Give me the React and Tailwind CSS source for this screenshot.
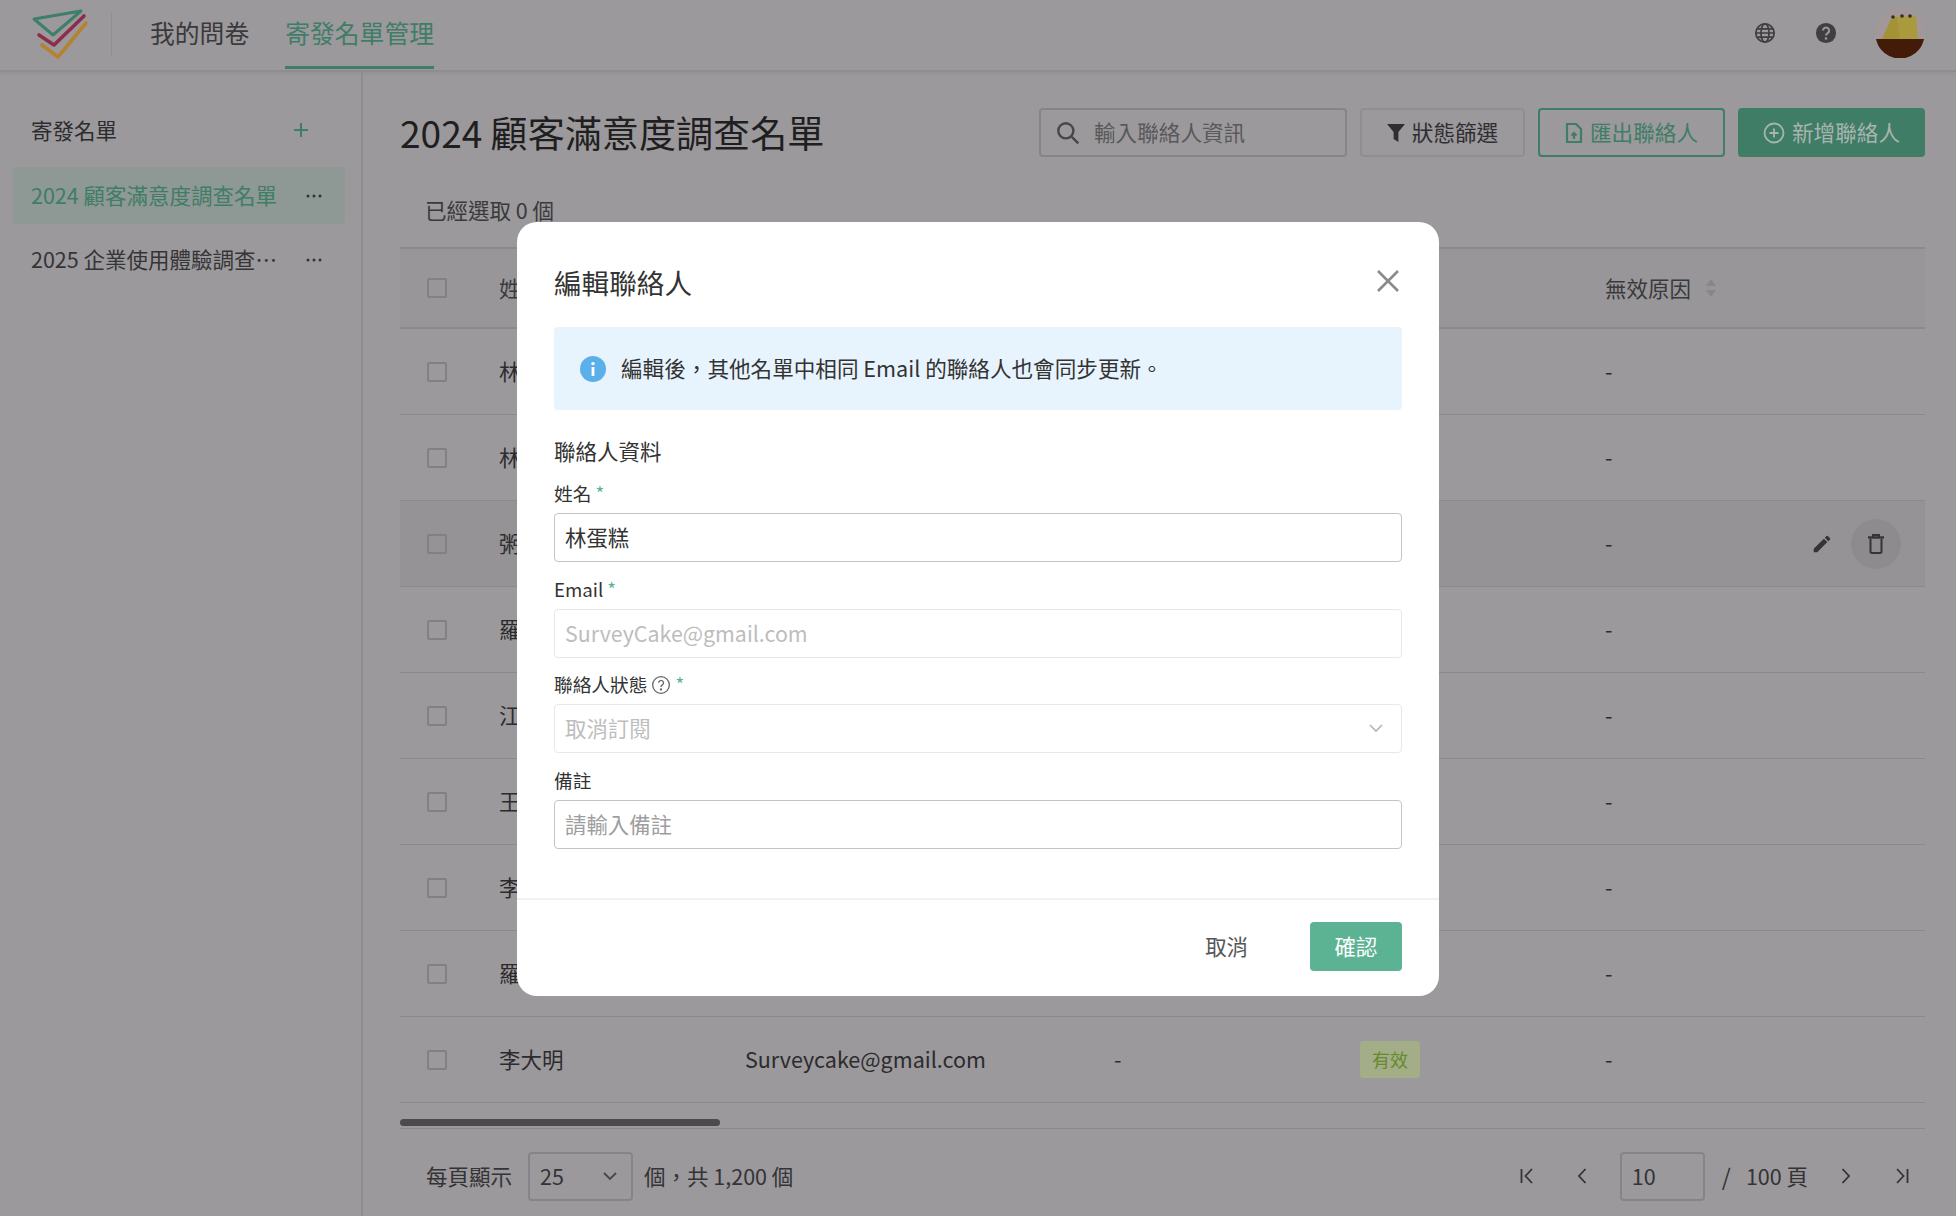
import React from "react";

const Checkbox = () => <span className="block w-[20px] h-[20px] border-2 border-[#818083] rounded-[2px]" />;

const Sort = () => (
  <svg width="12" height="20" viewBox="0 0 12 20" className="ml-[14px] text-[#88868a]" fill="currentColor">
    <path d="M6 1 11 8H1z" /><path d="M6 19 1 12h10z" />
  </svg>
);

const Dots = () => (
  <svg width="16" height="4" viewBox="0 0 16 4" className="text-[#333335]" fill="currentColor">
    <circle cx="2" cy="2" r="1.5" /><circle cx="8" cy="2" r="1.5" /><circle cx="14" cy="2" r="1.5" />
  </svg>
);

const rows = [
  { n: "林蛋糕", h: false },
  { n: "林小美", h: false },
  { n: "粥品香", h: true },
  { n: "羅大佑", h: false },
  { n: "江小魚", h: false },
  { n: "王小明", h: false },
  { n: "李小龍", h: false },
  { n: "羅志明", h: false },
  { n: "李大明", h: false },
];

const grid = "grid grid-cols-[99px_246px_369px_246px_245px_1fr] items-center";

const Row = ({ n, h }) => (
  <div className={`${grid} h-[86px] border-b border-[#8b898c] text-[21.5px] text-[#2c2b2d] ${h ? "bg-[#959396]" : ""}`}>
    <div className="pl-[27px]"><Checkbox /></div>
    <div>{n}</div>
    <div>Surveycake@gmail.com</div>
    <div>-</div>
    <div className="flex items-center">
      <span className="h-[37px] w-[60px] flex items-center justify-center rounded-[3px] bg-[#a3ad87] text-[18px] text-[#668a2c]">有效</span>
    </div>
    <div className="flex items-center justify-between pr-[24px]">
      <span>-</span>
      {h && (
        <div className="flex items-center gap-[18px]">
          <svg width="22" height="22" viewBox="0 0 24 24" fill="#343335">
            <path d="M3 17.25V21h3.75L17.81 9.94l-3.75-3.75L3 17.25zM20.71 7.04a1 1 0 0 0 0-1.41l-2.34-2.34a1 1 0 0 0-1.41 0l-1.83 1.83 3.75 3.75 1.83-1.83z" />
          </svg>
          <span className="w-[50px] h-[50px] rounded-full bg-[#8d8b8e] flex items-center justify-center">
            <svg width="24" height="24" viewBox="0 0 24 24" fill="none" stroke="#343335" strokeWidth="2">
              <path d="M4 5.5h16" strokeWidth="2.4" /><path d="M9 5V3h6v2" /><path d="M6.5 7v12.5a1.5 1.5 0 0 0 1.5 1.5h8a1.5 1.5 0 0 0 1.5-1.5V7" />
            </svg>
          </span>
        </div>
      )}
    </div>
  </div>
);

const Field = ({ label, required, help, children }) => (
  <div className="flex flex-col">
    <div className="h-[27px] flex items-center text-[18.7px] text-[#333]">
      <span>{label}</span>
      {help && (
        <svg width="20" height="20" viewBox="0 0 24 24" fill="none" stroke="#666" strokeWidth="1.6" className="ml-[4px]">
          <circle cx="12" cy="12" r="10" /><path d="M9.2 9.4a2.9 2.9 0 1 1 4.4 2.5c-1 .6-1.6 1.2-1.6 2.4" /><circle cx="12" cy="17.4" r=".6" fill="#666" />
        </svg>
      )}
      {required && <span className="ml-[4px] text-[#5cb393]">*</span>}
    </div>
    {children}
  </div>
);

export default function App() {
  return (
    <div className="relative h-screen w-full overflow-hidden bg-[#9b999c] font-['Noto_Sans_CJK_TC','Noto_Sans',sans-serif] text-[#1f1e20]">
      {/* header */}
      <header className="h-[72px] flex items-center border-b-2 border-[#8f8d90] shadow-[0_2px_4px_rgba(0,0,0,0.06)]">
        <svg width="60" height="54" viewBox="0 0 60 54" fill="none" strokeLinejoin="round" strokeLinecap="round" className="ml-[31px]">
          <path d="M3 11 50 3 22 27Z" stroke="#3e7f69" strokeWidth="3" />
          <path d="M8 27 23 37 53 8" stroke="#8d2c4b" strokeWidth="3.6" />
          <path d="M11 37 27 49 55 15" stroke="#b5832f" strokeWidth="3.6" />
        </svg>
        <div className="ml-[20px] w-px h-[44px] bg-[#908e91]" />
        <nav className="ml-[38px] flex h-full text-[24.8px]">
          <div className="flex items-center text-[#3a393b] h-full pb-[4px]">我的問卷</div>
          <div className="ml-[36px] flex items-center h-full text-[#3f7d66] relative pb-[4px]">
            寄發名單管理
            <span className="absolute left-0 right-0 bottom-[1px] h-[3px] bg-[#3f7d66]" />
          </div>
        </nav>
        <div className="ml-auto flex items-center pr-[31px] pb-[4px]">
          <svg width="22" height="22" viewBox="0 0 24 24" fill="none" stroke="#3f3e40" strokeWidth="1.9">
            <circle cx="12" cy="12" r="10" /><path d="M2 12h20M3.2 7.5h17.6M3.2 16.5h17.6" /><ellipse cx="12" cy="12" rx="4.4" ry="10" />
          </svg>
          <svg width="22" height="22" viewBox="0 0 24 24" className="ml-[39px]">
            <circle cx="12" cy="12" r="11" fill="#3f3e40" />
            <path d="M8.8 9.3a3.3 3.3 0 1 1 5 2.8c-1.2.7-1.8 1.3-1.8 2.6" fill="none" stroke="#9b999c" strokeWidth="2.2" />
            <circle cx="12" cy="18" r="1.4" fill="#9b999c" />
          </svg>
          <svg width="50" height="50" viewBox="0 0 50 50" className="ml-[38px]">
            <circle cx="25" cy="25" r="24.5" fill="#a2989a" />
            <path d="M16 11 22 9 25 31 7 31Z" fill="#a39334" />
            <path d="M22 9 41 8 43 31 25 31Z" fill="#a89a3d" />
            <circle cx="18" cy="9" r="1.8" fill="#3a2a1a" /><circle cx="27" cy="8" r="1.8" fill="#3a2a1a" /><circle cx="35" cy="8" r="1.8" fill="#3a2a1a" />
            <path d="M1 31h48A24.5 24.5 0 0 1 1 31Z" fill="#421c08" />
          </svg>
        </div>
      </header>

      <div className="flex h-[1144px]">
        {/* sidebar */}
        <aside className="w-[363px] border-r-2 border-[#8f8d90] shrink-0">
          <div className="h-[60px] mt-[28px] pl-[31px] pr-[52px] flex items-center justify-between text-[21.5px] text-[#2c2b2d]">
            <span>寄發名單</span>
            <svg width="16" height="16" viewBox="0 0 16 16" stroke="#3f7d66" strokeWidth="2"><path d="M8 1v14M1 8h14" /></svg>
          </div>
          <div className="mt-[7px] ml-[13px] w-[332px] h-[57px] rounded-[4px] bg-[#8e9895] pl-[18px] pr-[23px] flex items-center justify-between text-[21.5px] text-[#3f7d66]">
            <span>2024 顧客滿意度調查名單</span>
            <Dots />
          </div>
          <div className="mt-[7px] ml-[13px] w-[332px] h-[57px] pl-[18px] pr-[23px] flex items-center justify-between text-[21.5px] text-[#353436]">
            <span className="w-[248px] truncate">2025 企業使用體驗調查名單</span>
            <Dots />
          </div>
        </aside>

        {/* content */}
        <main className="flex-1 pl-[37px] pr-[31px] pt-[36px] min-w-0">
          <div className="flex items-center h-[49px]">
            <h1 className="text-[37.1px] leading-none font-normal text-[#1f1e20]">2024 顧客滿意度調查名單</h1>
            <div className="ml-auto flex items-center gap-[13px] text-[21.6px]">
              <div className="w-[308px] h-[49px] rounded-[4px] border-2 border-[#868487] flex items-center pl-[14px] text-[#59585a]">
                <svg width="26" height="26" viewBox="0 0 24 24" fill="none" stroke="#474648" strokeWidth="2.2"><circle cx="10" cy="10" r="7" /><path d="m15.5 15.5 6 6" /></svg>
                <span className="ml-[13px]">輸入聯絡人資訊</span>
              </div>
              <div className="w-[165px] h-[49px] rounded-[4px] border-2 border-[#908e91] flex items-center justify-center text-[#2f2e30]">
                <svg width="18" height="20" viewBox="0 0 18 20" fill="#2f2e30"><path d="M0 1h18l-6.6 8v10l-4.8-3V9z" /></svg>
                <span className="ml-[7px]">狀態篩選</span>
              </div>
              <div className="w-[187px] h-[49px] rounded-[4px] border-2 border-[#3f7d66] flex items-center justify-center text-[#3f7d66]">
                <svg width="18" height="22" viewBox="0 0 18 22" fill="none" stroke="#3f7d66" strokeWidth="2.2">
                  <path d="M2 2h9l5 5v13H2z" /><path d="M9 17v-6M6.5 13.5 9 11l2.5 2.5" />
                </svg>
                <span className="ml-[7px]">匯出聯絡人</span>
              </div>
              <div className="w-[187px] h-[49px] rounded-[4px] bg-[#3f7d66] flex items-center justify-center text-[#a9b4b0]">
                <svg width="22" height="22" viewBox="0 0 22 22" fill="none" stroke="#a9b4b0" strokeWidth="1.8">
                  <circle cx="11" cy="11" r="9.5" /><path d="M11 6.5v9M6.5 11h9" />
                </svg>
                <span className="ml-[7px]">新增聯絡人</span>
              </div>
            </div>
          </div>

          <div className="h-[90px] pt-[16px] pl-[25px] flex items-center text-[21.5px] text-[#3a393b]">已經選取 0 個</div>

          {/* table */}
          <div className={`${grid} h-[82px] border-y-2 border-[#8b898c] bg-[#989699] text-[21.5px] text-[#3a393b]`}>
            <div className="pl-[27px]"><Checkbox /></div>
            <div>姓名</div>
            <div>Email</div>
            <div>備註</div>
            <div className="flex items-center">狀態<Sort /></div>
            <div className="flex items-center">無效原因<Sort /></div>
          </div>
          {rows.map((r, i) => <Row key={i} {...r} />)}

          <div className="h-[26px] pt-[16px] border-b border-[#8b898c]">
            <div className="w-[320px] h-[7px] rounded-full bg-[#4b4a4c]" />
          </div>

          <div className="h-[94px] pl-[26px] pr-[16px] flex items-center text-[21.5px] text-[#343335]">
            <span>每頁顯示</span>
            <div className="ml-[16px] w-[105px] h-[49px] rounded-[4px] border-2 border-[#868487] flex items-center justify-between pl-[10px] pr-[14px]">
              <span>25</span>
              <svg width="14" height="9" viewBox="0 0 14 9" fill="none" stroke="#474648" strokeWidth="1.8"><path d="m1 1 6 6 6-6" /></svg>
            </div>
            <span className="ml-[11px]">個，共 1,200 個</span>
            <div className="ml-auto flex items-center">
              <svg width="14" height="16" viewBox="0 0 14 16" fill="none" stroke="#343335" strokeWidth="1.8"><path d="M1.5 1v14M12 1 5.5 8l6.5 7" /></svg>
              <svg width="10" height="16" viewBox="0 0 10 16" fill="none" stroke="#343335" strokeWidth="1.8" className="ml-[43px]"><path d="M8.5 1 2 8l6.5 7" /></svg>
              <div className="ml-[33px] w-[85px] h-[49px] rounded-[4px] border-2 border-[#868487] flex items-center pl-[10px]">10</div>
              <span className="ml-[17px] text-[23px]">/</span>
              <span className="ml-[15px]">100 頁</span>
              <svg width="10" height="16" viewBox="0 0 10 16" fill="none" stroke="#343335" strokeWidth="1.8" className="ml-[33px]"><path d="M1.5 1 8 8l-6.5 7" /></svg>
              <svg width="14" height="16" viewBox="0 0 14 16" fill="none" stroke="#343335" strokeWidth="1.8" className="ml-[44px]"><path d="M12.5 1v14M2 1l6.5 7L2 15" /></svg>
            </div>
          </div>
        </main>
      </div>

      {/* modal */}
      <div className="absolute left-[517px] top-[222px] w-[922px] h-[774px] bg-white rounded-[20px] flex flex-col">
        <div className="h-[105px] pl-[37px] pr-[40px] flex items-center justify-between pt-[16px]">
          <h2 className="text-[27.6px] font-normal text-[#333]">編輯聯絡人</h2>
          <svg width="22" height="22" viewBox="0 0 22 22" stroke="#8a8a8a" strokeWidth="2.6" className="-mt-[4px]"><path d="m1 1 20 20M21 1 1 21" /></svg>
        </div>
        <div className="mx-[37px] h-[83px] rounded-[4px] bg-[#e8f4fd] flex items-center pl-[26px] text-[21.6px] text-[#333]">
          <svg width="26" height="26" viewBox="0 0 26 26">
            <circle cx="13" cy="13" r="13" fill="#5cb0ea" />
            <circle cx="13" cy="7.6" r="1.7" fill="#fff" />
            <rect x="11.6" y="11" width="2.8" height="9" fill="#fff" />
          </svg>
          <span className="ml-[15px]">編輯後，其他名單中相同 Email 的聯絡人也會同步更新。</span>
        </div>
        <div className="mx-[37px] mt-[24px] flex flex-col">
          <div className="text-[21.5px] leading-[34px] text-[#333]">聯絡人資料</div>
          <div className="flex flex-col gap-[13.5px] mt-[12px]">
            <Field label="姓名" required>
              <div className="h-[49px] mt-[6px] rounded-[4px] border-[1.5px] border-[#c4c4c6] flex items-center pl-[10px] text-[21.4px] text-[#333]">林蛋糕</div>
            </Field>
            <Field label="Email" required>
              <div className="h-[49px] mt-[6px] rounded-[4px] border-[1.5px] border-[#e8e8ea] flex items-center pl-[10px] text-[21.4px] text-[#bdbdbd]">SurveyCake@gmail.com</div>
            </Field>
            <Field label="聯絡人狀態" required help>
              <div className="h-[49px] mt-[6px] rounded-[4px] border-[1.5px] border-[#e8e8ea] flex items-center justify-between pl-[10px] pr-[18px] text-[21.4px] text-[#bdbdbd]">
                <span>取消訂閱</span>
                <svg width="14" height="9" viewBox="0 0 14 9" fill="none" stroke="#b5b5b5" strokeWidth="1.6"><path d="m1 1 6 6 6-6" /></svg>
              </div>
            </Field>
            <Field label="備註">
              <div className="h-[49px] mt-[6px] rounded-[4px] border-[1.5px] border-[#c4c4c6] flex items-center pl-[10px] text-[21.4px] text-[#9e9e9e]">請輸入備註</div>
            </Field>
          </div>
        </div>
        <div className="mt-auto h-[98px] border-t-2 border-[#f1f1f1] flex items-center justify-end pr-[37px] pb-[4px]">
          <span className="text-[21.4px] text-[#555] mr-[62px]">取消</span>
          <div className="w-[92px] h-[49px] rounded-[4px] bg-[#5cb393] flex items-center justify-center text-[21.4px] text-white">確認</div>
        </div>
      </div>
    </div>
  );
}
